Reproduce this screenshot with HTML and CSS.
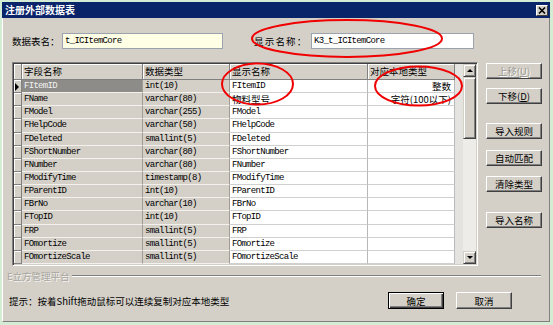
FILE: index.html
```html
<!DOCTYPE html>
<html>
<head>
<meta charset="utf-8">
<link rel="stylesheet" href="styles.css">
</head>
<body>
<div class="screen">
  <div class="window">
    <div class="titlebar">
      <span class="title">注册外部数据表</span>
      <span class="close"><svg width="8" height="7" viewBox="0 0 8 7"><path d="M1 0.5 L7 6.5 M7 0.5 L1 6.5" stroke="#000" stroke-width="1.6"/></svg></span>
    </div>
    <div class="body">
      <div class="toprow">
        <label class="lbl lbl1">数据表名：</label>
        <div class="input yellow">t_ICItemCore</div>
        <label class="lbl lbl2">显示名称：</label>
        <div class="input wide">K3_t_ICItemCore</div>
      </div>

      <div class="main">
        <div class="grid">
          <div class="table">
            <div class="hd rh"></div><div class="hd">字段名称</div><div class="hd">数据类型</div><div class="hd">显示名称</div><div class="hd">对应本地类型</div>

            <div class="rh cur"><i class="tri"></i></div><div class="c g sel">FItemID</div><div class="c g">int(10)</div><div class="c w">FItemID</div><div class="c w r cj">整数</div>
            <div class="rh"></div><div class="c g">FName</div><div class="c g">varchar(80)</div><div class="c w cj">物料型号</div><div class="c w r cj">字符(100以下)</div>
            <div class="rh"></div><div class="c g">FModel</div><div class="c g">varchar(255)</div><div class="c w">FModel</div><div class="c w"></div>
            <div class="rh"></div><div class="c g">FHelpCode</div><div class="c g">varchar(50)</div><div class="c w">FHelpCode</div><div class="c w"></div>
            <div class="rh"></div><div class="c g">FDeleted</div><div class="c g">smallint(5)</div><div class="c w">FDeleted</div><div class="c w"></div>
            <div class="rh"></div><div class="c g">FShortNumber</div><div class="c g">varchar(80)</div><div class="c w">FShortNumber</div><div class="c w"></div>
            <div class="rh"></div><div class="c g">FNumber</div><div class="c g">varchar(80)</div><div class="c w">FNumber</div><div class="c w"></div>
            <div class="rh"></div><div class="c g">FModifyTime</div><div class="c g">timestamp(8)</div><div class="c w">FModifyTime</div><div class="c w"></div>
            <div class="rh"></div><div class="c g">FParentID</div><div class="c g">int(10)</div><div class="c w">FParentID</div><div class="c w"></div>
            <div class="rh"></div><div class="c g">FBrNo</div><div class="c g">varchar(10)</div><div class="c w">FBrNo</div><div class="c w"></div>
            <div class="rh"></div><div class="c g">FTopID</div><div class="c g">int(10)</div><div class="c w">FTopID</div><div class="c w"></div>
            <div class="rh"></div><div class="c g">FRP</div><div class="c g">smallint(5)</div><div class="c w">FRP</div><div class="c w"></div>
            <div class="rh"></div><div class="c g">FOmortize</div><div class="c g">smallint(5)</div><div class="c w">FOmortize</div><div class="c w"></div>
            <div class="rh"></div><div class="c g">FOmortizeScale</div><div class="c g">smallint(5)</div><div class="c w">FOmortizeScale</div><div class="c w"></div>
          </div>
          <div class="vscroll">
            <div class="sbtn"><i class="up"></i></div>
            <div class="thumb"></div>
            <div class="track"></div>
            <div class="sbtn"><i class="down"></i></div>
          </div>
        </div>

        <div class="side">
          <button class="btn dis b-up">上移(<u>U</u>)</button>
          <button class="btn b-down">下移(<u>D</u>)</button>
          <button class="btn b-rule">导入规则</button>
          <button class="btn b-auto">自动匹配</button>
          <button class="btn b-clear">清除类型</button>
          <button class="btn b-name">导入名称</button>
        </div>
      </div>

      <div class="group"><span class="gtext">E立方管理平台</span><i class="gline"></i></div>

      <div class="bottom">
        <span class="tip">提示：按着Shift拖动鼠标可以连续复制对应本地类型</span>
        <button class="btn def">确定</button>
        <button class="btn">取消</button>
      </div>
    </div>
  </div>

  <svg class="marks" width="553" height="325" viewBox="0 0 553 325">
    <ellipse cx="347" cy="38.5" rx="95" ry="18.5" fill="none" stroke="#f00000" stroke-width="2"/>
    <ellipse cx="257.5" cy="84" rx="35.5" ry="20.5" fill="none" stroke="#f00000" stroke-width="2"/>
    <ellipse cx="418.5" cy="86" rx="43.5" ry="19.5" fill="none" stroke="#f00000" stroke-width="2"/>
  </svg>
</div>
</body>
</html>
```

FILE: styles.css
```css
* { box-sizing: border-box; margin: 0; padding: 0; }
html, body { margin: 0; background: #d3ecd3; }
body {
  width: 553px; height: 325px; overflow: hidden;
  font-family: "Noto Sans CJK SC", "Noto Sans", sans-serif;
  font-size: 9.5px; color: #000;
}
.screen {
  position: relative;
  width: 553px; height: 325px;
  padding: 2px 0 0 2px;
  background: #d3ecd3;
}
.window {
  width: 548px; height: 320px;
  display: flex; flex-direction: column;
  background: #d4d0c8;
}
.titlebar {
  height: 16px; flex: none;
  background: #0a246a;
  display: flex; align-items: center; justify-content: space-between;
  padding: 0 2px 0 3px;
}
.title { color: #fff; font-weight: bold; font-size: 10px; line-height: 16px; letter-spacing: 0; }
.close {
  width: 12px; height: 11px;
  background: #d4d0c8;
  border: 1px solid; border-color: #fff #404040 #404040 #fff;
  display: flex; align-items: center; justify-content: center;
}
.body {
  flex: 1;
  border-left: 1px solid #fff;
  border-right: 1px solid #808080;
  border-bottom: 1px solid #808080;
  display: flex; flex-direction: column;
}

/* top row */
.toprow {
  margin-top: 15px; height: 16px;
  display: flex; align-items: center;
  padding-left: 9px;
}
.lbl { line-height: 16px; white-space: nowrap; }
.lbl1 { width: 50px; }
.lbl2 { width: 57px; margin-left: 31px; letter-spacing: 1.2px; }
.input {
  width: 161px; height: 16px;
  border: 1px solid #9aa3ae;
  background: #fff;
  font-family: "Liberation Mono", monospace; font-size: 9px; letter-spacing: -0.7px;
  line-height: 14px; padding-left: 2px;
}
.input.yellow { background: #ffffe6; }
.input.wide { width: 163px; }

/* main */
.main { margin-top: 13px; display: flex; padding-left: 9px; }
.grid {
  width: 466px; height: 204px;
  border: 1px solid; border-color: #808080 #fff #fff #808080;
  box-shadow: inset 1px 1px #404040, inset -1px -1px #d4d0c8;
  padding: 1px;
  display: flex;
}
.table {
  width: 449px; height: 200px;
  display: grid;
  grid-template-columns: 8px 121px 87px 138px 87px;
  grid-template-rows: 16px repeat(14, 1fr);
  background: #e4e3e0;
}
.hd {
  background: #d4d0c8;
  border-right: 1px solid #808080; border-bottom: 1px solid #808080;
  box-shadow: inset 1px 1px #fff;
  padding-left: 2px; line-height: 15px; white-space: nowrap;
}
.rh {
  background: #d4d0c8;
  border-right: 1px solid #808080; border-bottom: 1px solid #808080;
  box-shadow: inset 1px 1px #fff;
  position: relative;
}
.rh.hd { padding: 0; }
.tri {
  position: absolute; left: 1px; top: 3px;
  width: 0; height: 0;
  border-top: 4px solid transparent; border-bottom: 4px solid transparent;
  border-left: 4px solid #000;
}
.c {
  font-family: "Liberation Mono", monospace; font-size: 9px; letter-spacing: -0.7px;
  padding-left: 2px; white-space: nowrap; overflow: hidden;
  display: flex; align-items: center;
}
.c.cj { font-family: "Noto Sans CJK SC", sans-serif; font-size: 9.5px; letter-spacing: 0; }
.c.g {
  background: #d4d0c8;
  border-right: 1px solid #a09c94; border-bottom: 1px solid #f2f1ee;
}
.c.w {
  background: #fff;
  border-right: 1px solid #b8b8b8; border-bottom: 1px solid #d0d0d0;
}
.c.r { justify-content: flex-end; padding-right: 3px; }
.c.sel { background: #8d8c89; color: #f2f2f2; }

.vscroll { width: 13px; height: 200px; display: flex; flex-direction: column; }
.sbtn {
  height: 13px; flex: none;
  background: #d4d0c8;
  border: 1px solid; border-color: #d4d0c8 #404040 #404040 #d4d0c8;
  box-shadow: inset 1px 1px #fff, inset -1px -1px #808080;
  display: flex; align-items: center; justify-content: center;
}
.up, .down { width: 0; height: 0; border-left: 3px solid transparent; border-right: 3px solid transparent; }
.up { border-bottom: 3px solid #000; }
.down { border-top: 3px solid #000; }
.thumb {
  height: 62px; flex: none;
  background: #d4d0c8;
  border: 1px solid; border-color: #d4d0c8 #404040 #404040 #d4d0c8;
  box-shadow: inset 1px 1px #fff, inset -1px -1px #808080;
}
.track { flex: 1; background: #edece8; }

/* buttons */
.btn {
  width: 56px; height: 16px;
  background: #d4d0c8;
  border: 1px solid; border-color: #fff #404040 #404040 #fff;
  box-shadow: inset -1px -1px #808080;
  font-family: "Noto Sans CJK SC", sans-serif; font-size: 9.5px; line-height: 13px;
  color: #000; text-align: center;
}
.btn u { text-decoration: underline; }
.btn.dis { color: #9a978f; text-shadow: 1px 1px #fff; }
.side { display: flex; flex-direction: column; margin-left: 8px; }
.b-up { margin-top: 1px; }
.b-down { margin-top: 9px; }
.b-rule { margin-top: 19px; }
.b-auto { margin-top: 11px; }
.b-clear { margin-top: 10px; }
.b-name { margin-top: 20px; }

/* group line */
.group {
  margin-top: 5px; height: 10px;
  display: flex; align-items: center;
  padding-left: 4px; padding-right: 8px;
}
.gtext { color: #a8a59e; text-shadow: 1px 1px #f4f3f0; line-height: 10px; white-space: nowrap; }
.gline { flex: 1; height: 2px; margin-left: 2px; border-top: 1px solid #808080; border-bottom: 1px solid #fff; }

/* bottom */
.bottom {
  margin-top: 11px; height: 17px;
  display: flex; align-items: center;
  padding-left: 6px; padding-right: 37px;
  gap: 12px;
}
.tip { flex: 1; white-space: nowrap; }
.bottom .btn { height: 17px; line-height: 14px; }
.btn.def {
  border-color: #000;
  box-shadow: inset 1px 1px #fff, inset -1px -1px #404040, inset -2px -2px #808080;
}

.marks { position: absolute; left: 0; top: 0; pointer-events: none; }
```
